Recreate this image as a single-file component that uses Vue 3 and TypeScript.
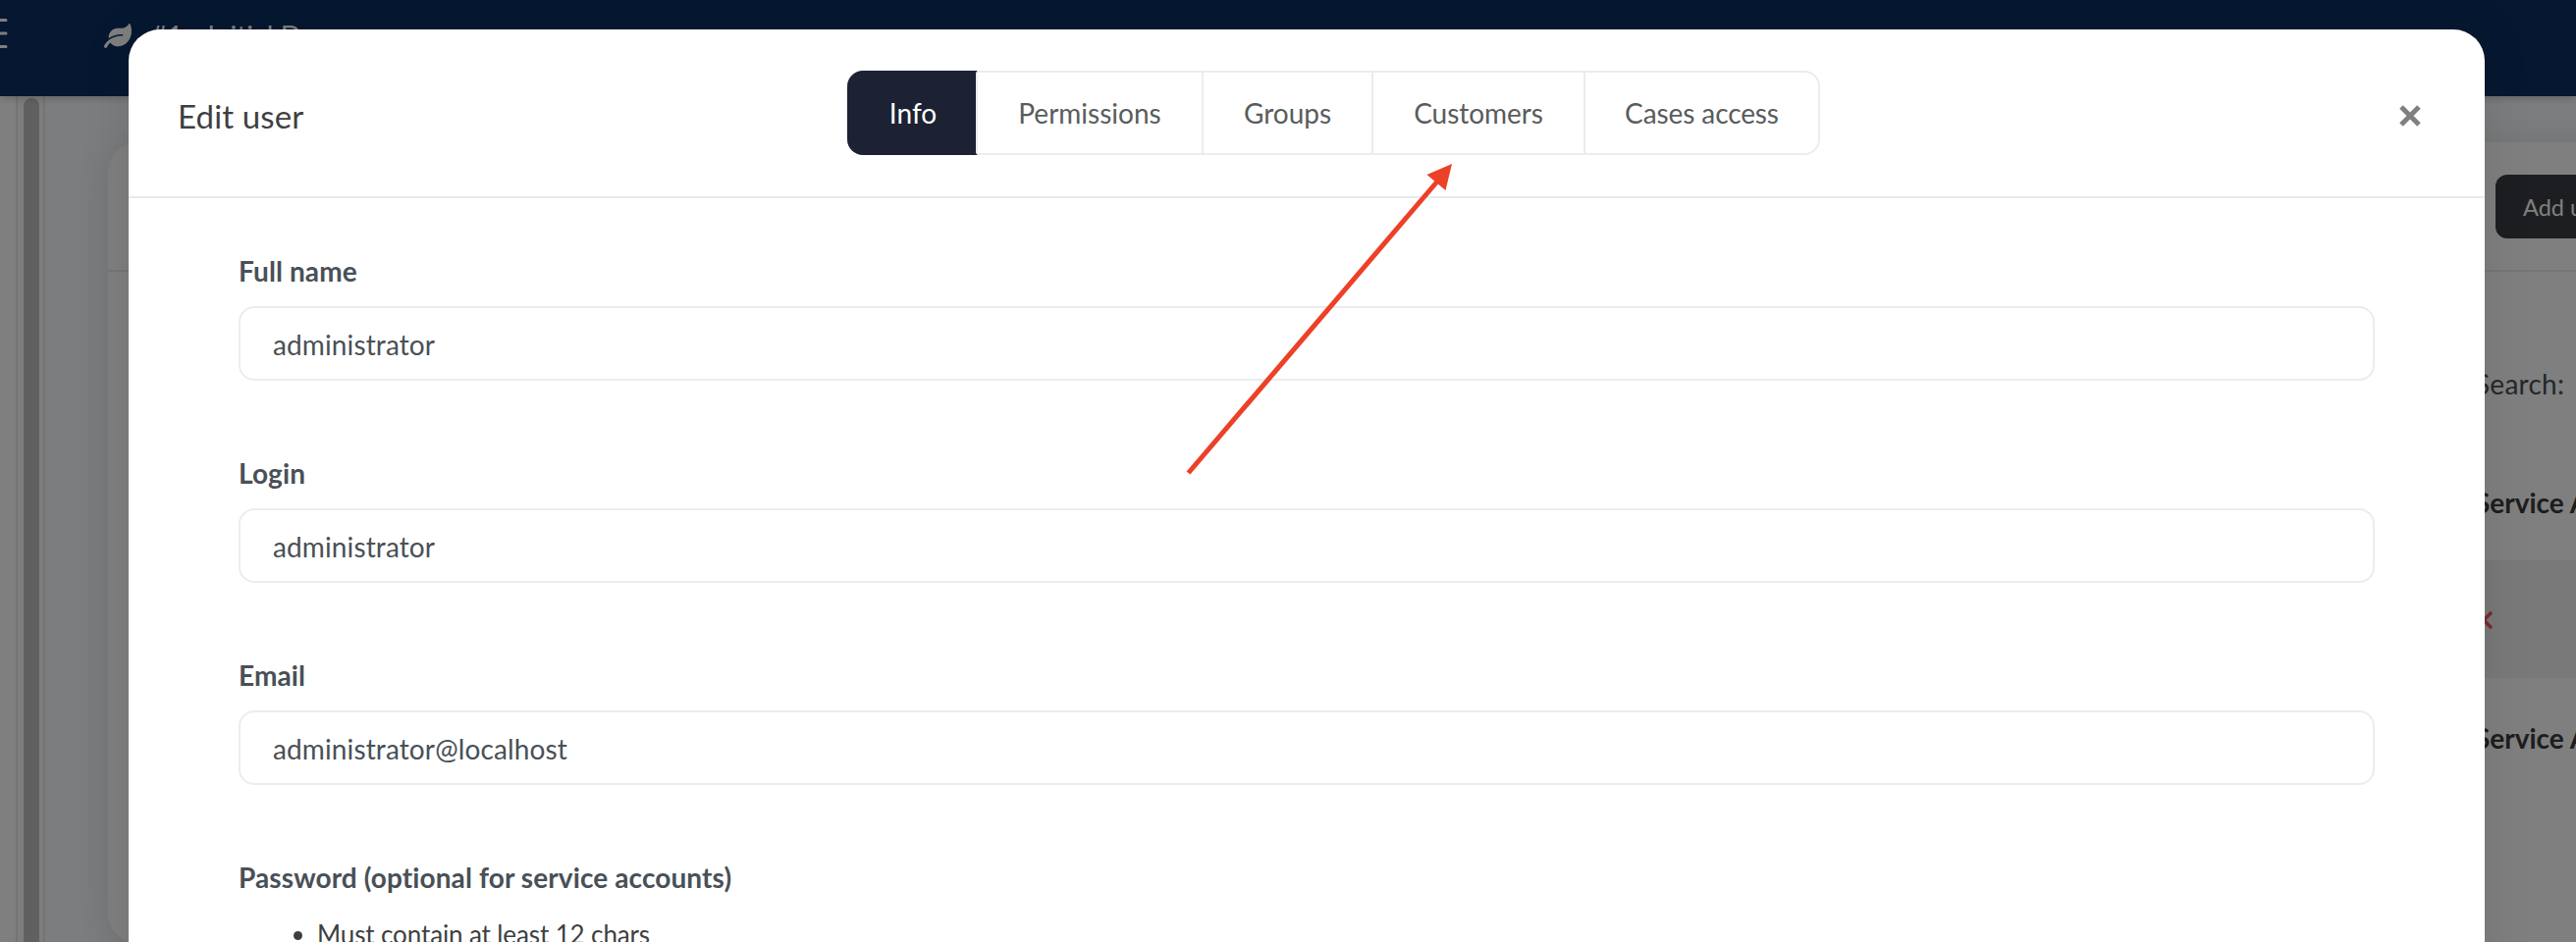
<script setup lang="ts">
import { ref } from 'vue'

interface Field {
  label: string
  value: string
}

const tabs: string[] = ['Info', 'Permissions', 'Groups', 'Customers', 'Cases access']
const activeTab = ref<string>('Info')

const fields = ref<Field[]>([
  { label: 'Full name', value: 'administrator' },
  { label: 'Login', value: 'administrator' },
  { label: 'Email', value: 'administrator@localhost' },
])
</script>

<template>
  <div class="screen">
    <div class="page">
      <header class="navbar">
        <svg class="menu-icon" width="32" height="32" viewBox="0 0 32 32">
          <path d="M2 2.500H30M2 16H30M2 29.500H30" stroke="#fff" stroke-width="3" stroke-linecap="round" />
        </svg>
        <svg class="leaf-icon" width="28" height="25" viewBox="0 0 576 512">
          <path
            fill="#fff"
            d="M546.200 9.700c-5.600-12.500-21.600-13-28.300-1.200C486.900 62.400 431.400 96 368 96h-80C182 96 96 182 96 288c0 7 .8 13.700 1.500 20.500C161.300 262.800 253.400 224 384 224c8.800 0 16 7.200 16 16s-7.200 16-16 16C132.600 256 26 410.100 2.400 468c-6.600 16.300 1.200 34.900 17.500 41.600 16.400 6.800 35-1.100 41.800-17.300 1.500-3.600 20.900-47.900 71.900-90.600 32.400 43.900 94 85.800 174.900 77.200C465.500 467.500 576 326.700 576 154.300c0-50.200-10.800-102.200-29.800-144.600z"
          />
        </svg>
        <span class="case-name">#1 - Initial Demo</span>
      </header>
      <div class="body">
        <aside class="sidebar"></aside>
        <div class="scroll-track"><div class="scroll-thumb"></div></div>
        <main class="content">
          <section class="card">
            <div class="card-head"><button class="add-button">Add user</button></div>
            <div class="search-row">Search:</div>
            <div class="row head-row">Service Account</div>
            <div class="row striped">
              <svg class="cross" width="18" height="18" viewBox="0 0 18 18">
                <path d="M2 2L16 16M16 2L2 16" stroke="#f25961" stroke-width="3.600" stroke-linecap="round" />
              </svg>
            </div>
            <div class="row foot-row">Service Account</div>
          </section>
        </main>
      </div>
    </div>

    <div class="backdrop">
      <div class="modal">
        <div class="modal-head">
          <h4 class="title">Edit user</h4>
          <nav class="tabs">
            <a
              v-for="tab in tabs"
              :key="tab"
              class="tab"
              :class="{ active: tab === activeTab }"
              @click="activeTab = tab"
              >{{ tab }}</a
            >
          </nav>
          <svg class="close" width="24" height="24" viewBox="0 0 24 24">
            <path d="M3 3L21 21M21 3L3 21" stroke="#808080" stroke-width="5" />
          </svg>
        </div>
        <div class="form">
          <div v-for="field in fields" :key="field.label" class="field">
            <label class="label">{{ field.label }}</label>
            <input v-model="field.value" class="input" type="text" />
          </div>
          <div class="field">
            <label class="label">Password (optional for service accounts)</label>
            <ul class="hints">
              <li>Must contain at least 12 chars</li>
            </ul>
          </div>
        </div>
      </div>
    </div>

    <svg class="arrow" width="280" height="330" viewBox="1205 160 280 330">
      <path d="M1210.500 482L1464 185" stroke="#ec4127" stroke-width="5" />
      <path d="M1479 167L1453.500 178L1472.500 194Z" fill="#ec4127" />
    </svg>
  </div>
</template>

<style>
body {
  margin: 0;
}
</style>

<style scoped>
.screen {
  position: relative;
  width: 2624px;
  height: 960px;
  overflow: hidden;
  font-family: Lato, 'Open Sans', sans-serif;
  font-size: 28px;
  font-variant-ligatures: none;
  color: #495057;
}
.screen * {
  box-sizing: border-box;
}
.page {
  display: flex;
  flex-direction: column;
  height: 960px;
  isolation: isolate;
  background: #f9fbfd;
}
.navbar {
  position: relative;
  z-index: 1;
  flex: none;
  display: flex;
  align-items: flex-start;
  height: 98px;
  background: #0c2f62;
  box-shadow: 0 0 10px rgba(0, 0, 0, 0.3);
  color: #fff;
}
.menu-icon {
  margin: 18px 0 0 -24px;
}
.leaf-icon {
  margin: 24px 0 0 98px;
}
.case-name {
  margin: 18px 0 0 20px;
  line-height: 36px;
  white-space: nowrap;
}
.body {
  flex: 1;
  display: flex;
  min-height: 0;
}
.sidebar {
  width: 16px;
  background: #fff;
}
.scroll-track {
  width: 30px;
  padding: 2px 4px 0;
  background: #fafafa;
  border: solid #e8e8e8;
  border-width: 0 2px;
}
.scroll-thumb {
  width: 16px;
  height: 900px;
  border-radius: 8px;
  margin-left: 2px;
  background: #c1c1c1;
}
.content {
  flex: 1;
  min-width: 0;
  padding: 47px 0 0 64px;
}
.card {
  width: 2700px;
  height: 816px;
  border-radius: 30px;
  background: #fff;
  box-shadow: 0 0 40px rgba(69, 65, 78, 0.12);
}
.card-head {
  height: 132px;
  padding: 33px 0 0 2432px;
  border-bottom: 2px solid #ebecec;
}
.add-button {
  display: block;
  width: 150px;
  height: 65px;
  padding: 0 0 0 28px;
  border: 0;
  border-radius: 12px;
  background: #3a3c42;
  color: #fff;
  font: 23.500px Lato, sans-serif;
  text-align: left;
}
.search-row {
  height: 174px;
  padding: 96px 0 0 2411px;
  line-height: 36px;
  letter-spacing: 0.25px;
}
.row {
  display: flex;
  align-items: center;
  height: 120px;
  margin-left: 60px;
  padding: 2px 0 0 2351px;
  color: #3a3b3c;
  font-weight: 700;
  white-space: nowrap;
}
.striped {
  background: #f2f2f2;
}
.backdrop {
  position: absolute;
  inset: 0;
  display: flex;
  justify-content: center;
  align-items: flex-start;
  padding: 30px 0 0 38px;
  background: rgba(0, 0, 0, 0.5);
}
.modal {
  width: 2400px;
  height: 1400px;
  border-radius: 32px;
  background: #fff;
  box-shadow: 0 0 50px rgba(0, 0, 0, 0.1);
}
.modal-head {
  display: flex;
  align-items: center;
  justify-content: space-between;
  height: 172px;
  padding: 0 64px 0 50px;
  border-bottom: 2px solid #e7ebef;
}
.title {
  width: 682px;
  margin: 5px 0 0;
  color: #3e3f42;
  font-size: 33px;
  font-weight: 400;
  letter-spacing: 0.15px;
}
.tabs {
  display: flex;
  height: 86px;
  margin-right: auto;
  border-radius: 16px;
}
.tab {
  display: flex;
  align-items: center;
  justify-content: center;
  width: 230px;
  border: solid #ebecec;
  border-width: 2px 2px 2px 0;
  color: #585d5c;
  line-height: 36px;
  white-space: nowrap;
}
.tab:nth-child(1) {
  width: 133px;
  padding-left: 3px;
}
.tab:nth-child(3) {
  width: 173px;
}
.tab:nth-child(4) {
  width: 216px;
  letter-spacing: -0.04px;
}
.tab:last-child {
  width: 239px;
  letter-spacing: -0.1px;
  border-radius: 0 16px 16px 0;
}
.tab.active {
  border-color: #1c2133;
  border-right-color: #ebecec;
  border-radius: 16px 0 0 16px;
  background: #1c2133;
  color: #fff;
}
.close {
  margin-top: 6px;
}
.form {
  padding: 56px 112px 0;
}
.field {
  display: flex;
  flex-direction: column;
  height: 206px;
}
.label {
  height: 54px;
  line-height: 36px;
  font-weight: 700;
  letter-spacing: 0.11px;
}
.input {
  height: 76px;
  padding: 2px 33px 0;
  border: 2px solid #ebecf2;
  border-radius: 16px;
  outline: 0;
  background: #fff;
  color: #495057;
  font: 28px Lato, sans-serif;
  letter-spacing: 0.12px;
}
.hints {
  margin: 0;
  padding: 1px 0 0 80px;
  color: #3e3f42;
  font-size: 26px;
  line-height: 42px;
  letter-spacing: -0.12px;
}
.arrow {
  position: absolute;
  left: 1205px;
  top: 160px;
}
</style>
